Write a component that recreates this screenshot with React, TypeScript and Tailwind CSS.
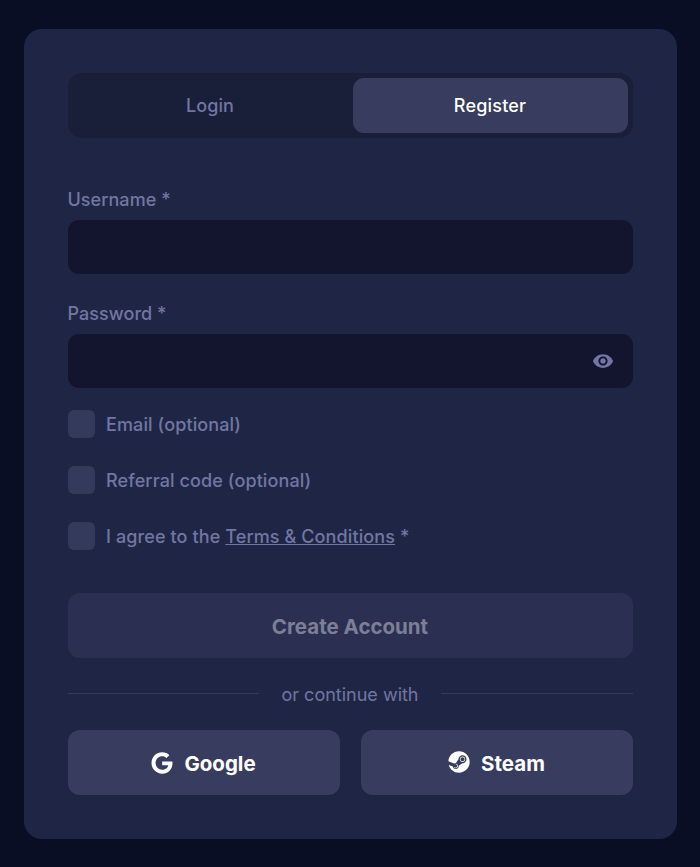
import { useState } from "react";
import { FaGoogle, FaSteam } from "react-icons/fa";
import { MdVisibility } from "react-icons/md";

const labelClass = "block h-6 text-[18px] leading-6 font-medium tracking-[0.05px] text-[#7276a3]";
const inputClass = "block h-[54.5px] w-full rounded-[11px] bg-[#13152f] px-4 text-white outline-none";

function Checkbox({ children }: { children: React.ReactNode }) {
  return (
    <label className="flex h-[27.5px] items-center gap-[11px] text-[18px] font-medium tracking-[0.11px] text-[#7276a3]">
      <span className="h-[27.5px] w-[27.5px] shrink-0 rounded-[6px] bg-[#343a5b]" />
      <span className="pt-[2px]">{children}</span>
    </label>
  );
}

export default function App() {
  const [tab, setTab] = useState("register");

  return (
    <div className="min-h-[867px] bg-[#0a0e24] px-[23.5px] pt-[29px] font-['Inter',sans-serif]">
      <div className="h-[810px] rounded-[18px] bg-[#1f2645] p-[44px]">
        <div className="flex h-[64.5px] gap-[5px] rounded-[14px] bg-[#191e39] p-[5px]">
          <button
            onClick={() => setTab("login")}
            className="flex-1 rounded-[11px] text-[18px] font-medium tracking-[0.05px] text-[#7276a3]"
          >
            Login
          </button>
          <button
            onClick={() => setTab("register")}
            className={`flex-1 rounded-[11px] text-[18px] font-medium tracking-[0.2px] text-white ${tab === "register" ? "bg-[#383d60]" : ""}`}
          >
            Register
          </button>
        </div>

        <div className="mt-[50px]">
          <label className={labelClass}>Username *</label>
          <input className={`${inputClass} mt-2`} />
        </div>

        <div className="mt-[27.5px]">
          <label className={labelClass}>Password *</label>
          <div className="relative mt-2">
            <input type="password" className={inputClass} />
            <MdVisibility className="absolute top-[16.5px] right-[18.5px] text-[22px] text-[#7276a3]" />
          </div>
        </div>

        <div className="mt-[22px] flex flex-col gap-[28.5px]">
          <Checkbox>Email (optional)</Checkbox>
          <Checkbox>Referral code (optional)</Checkbox>
          <Checkbox>
            I agree to the <a className="underline">Terms &amp; Conditions</a> *
          </Checkbox>
        </div>

        <button className="mt-[43px] h-[65px] w-full rounded-[12px] bg-[#2b3052] pt-[4px] text-[20.5px] font-bold text-[#7c7f97]">
          Create Account
        </button>

        <div className="mt-6 flex h-6 items-center gap-[22px] text-[18px] text-[#7276a3]">
          <div className="h-px flex-1 bg-[#353a5c]" />
          <span className="pt-px">or continue with</span>
          <div className="h-px flex-1 bg-[#353a5c]" />
        </div>

        <div className="mt-6 grid grid-cols-2 gap-[21px]">
          <button className="flex h-[65.5px] items-center justify-center gap-[11px] rounded-[12px] bg-[#383d60] pt-[5px] text-[20.5px] font-bold text-white">
            <FaGoogle className="-mt-[4px] text-[22px]" />
            Google
          </button>
          <button className="flex h-[65.5px] items-center justify-center gap-[11px] rounded-[12px] bg-[#383d60] pt-[5px] text-[20.5px] font-bold text-white">
            <FaSteam className="-mt-[5px] text-[22px]" />
            Steam
          </button>
        </div>
      </div>
    </div>
  );
}
